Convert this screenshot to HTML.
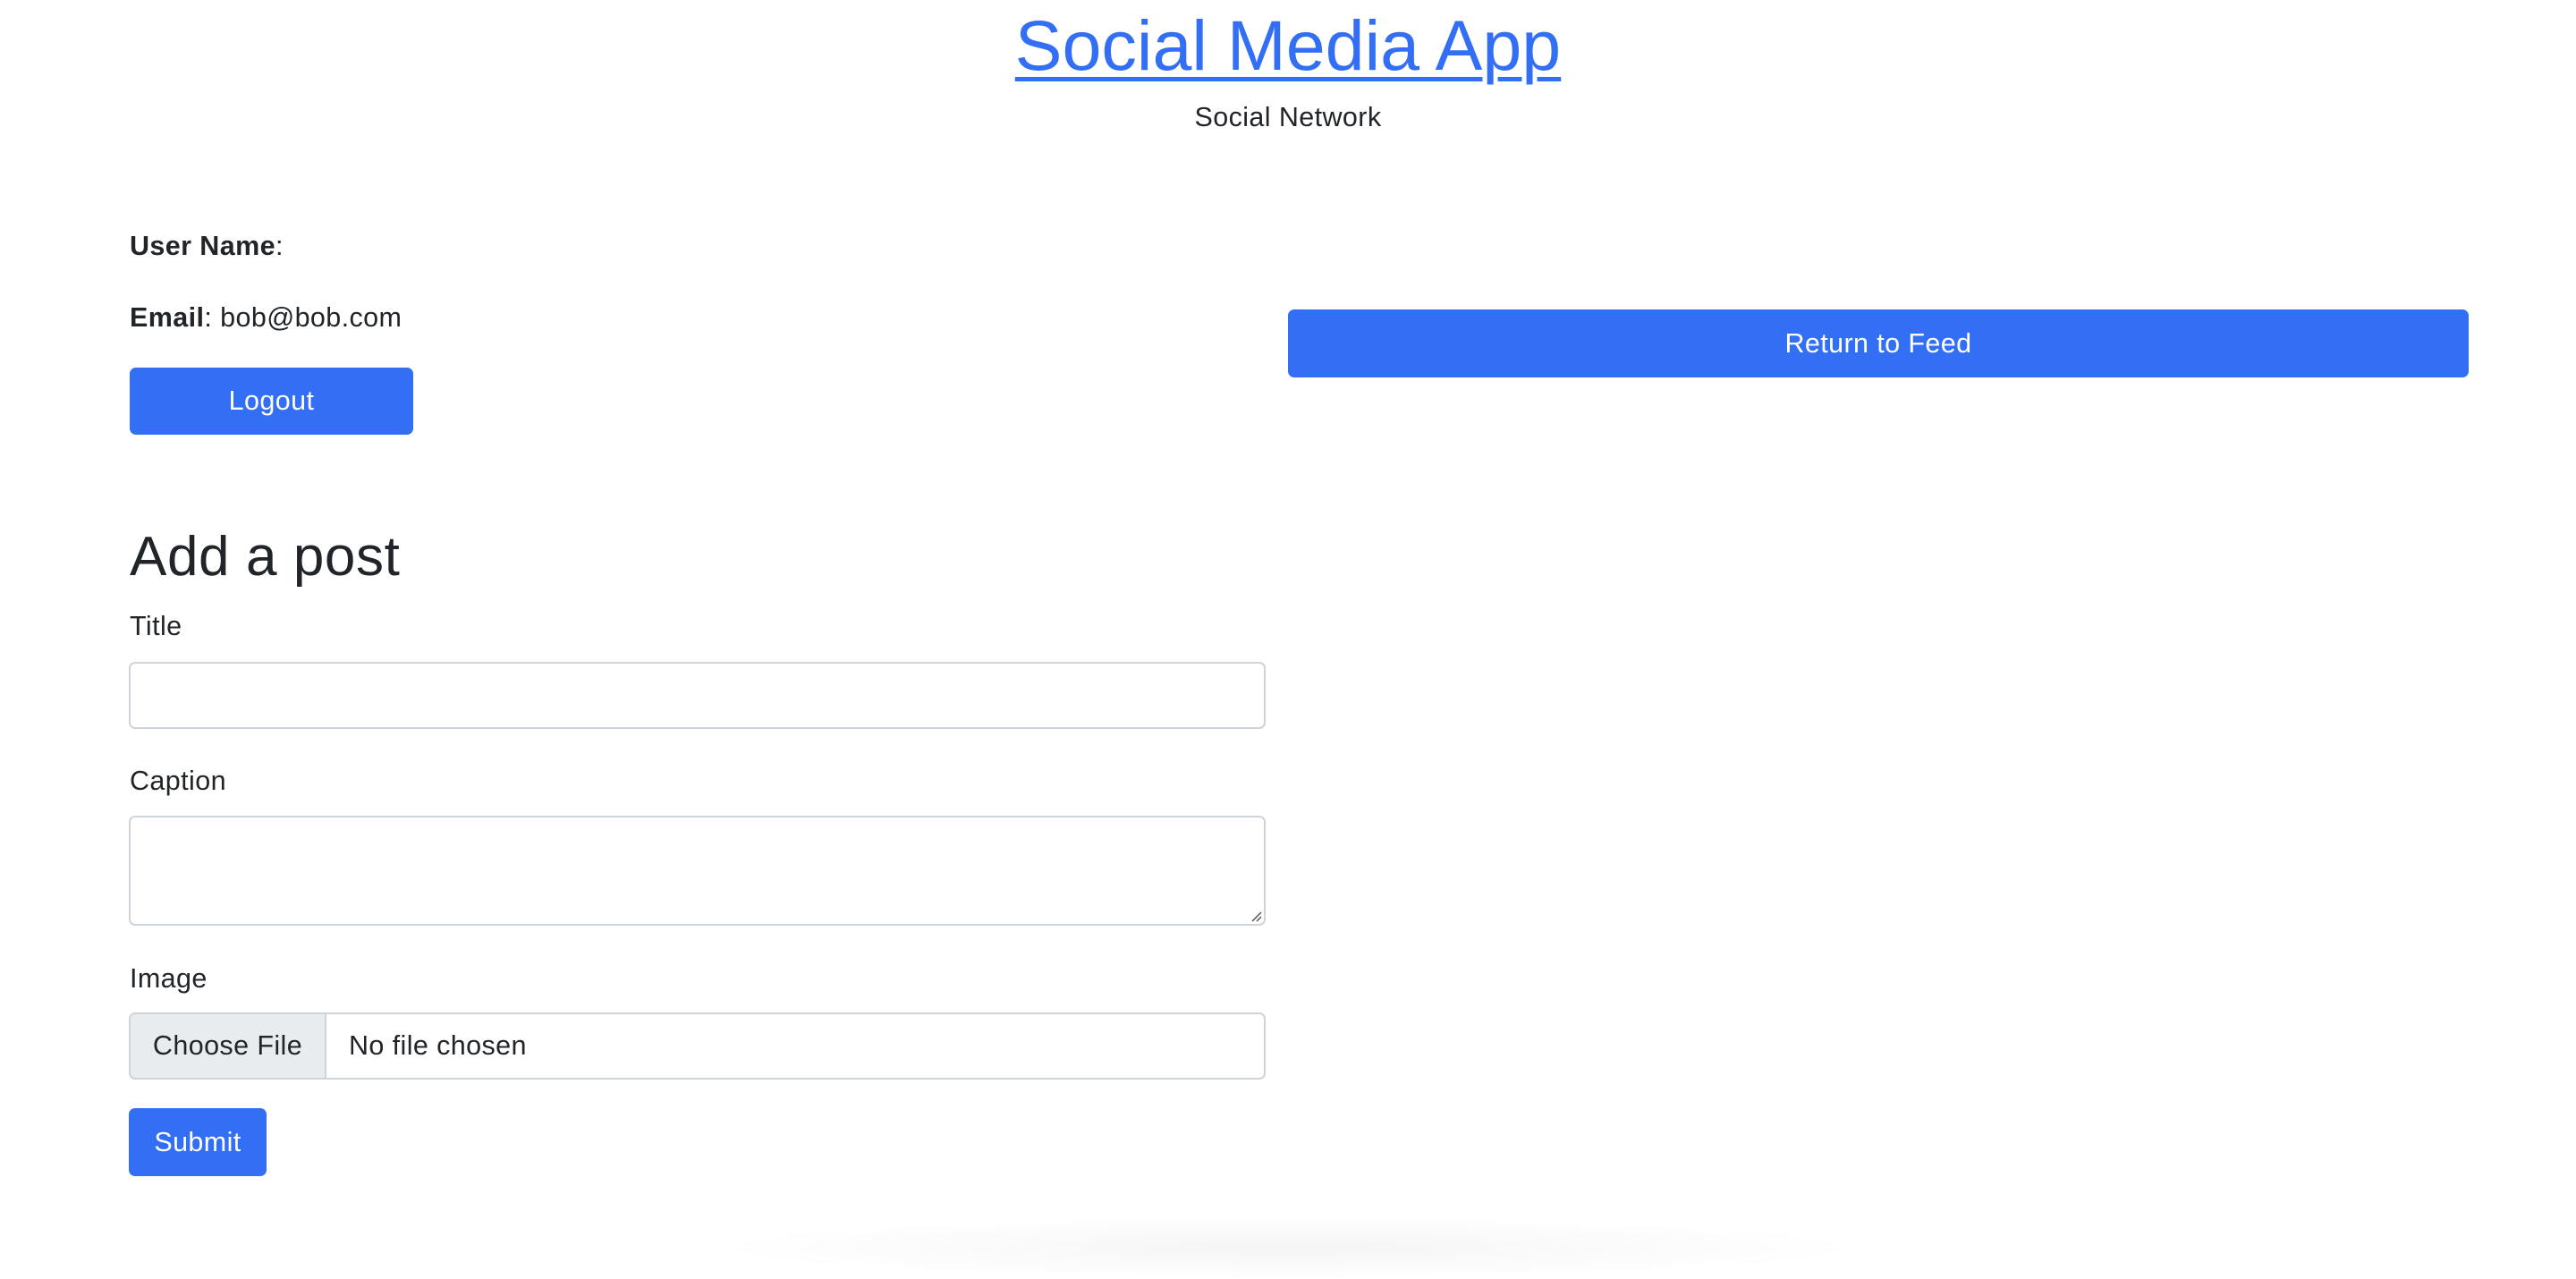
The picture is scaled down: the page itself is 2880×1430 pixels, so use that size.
<!DOCTYPE html>
<html><head><style>
*{box-sizing:border-box;margin:0;padding:0}
body{width:2880px;height:1384px;background:#fff;font-family:"Liberation Sans",sans-serif;color:#212529;position:relative;overflow:hidden;font-size:30.5px;letter-spacing:0.4px}
.a{position:absolute;white-space:nowrap}
.btn{position:absolute;background:#336ff5;color:#fff;border-radius:7px;display:flex;align-items:center;justify-content:center;font-size:30.5px}
.inp{position:absolute;border:2px solid #ced4da;border-radius:7px;background:#fff}
</style></head><body>
<div class="a" style="left:0;width:2880px;text-align:center;top:3px;font-size:79px;line-height:96px;letter-spacing:0"><span style="color:#336ff5;text-decoration:underline;text-decoration-thickness:5px;text-underline-offset:8px">Social Media App</span></div>
<div class="a" style="left:0;width:2880px;text-align:center;top:113px;line-height:36px">Social Network</div>
<div class="a" style="left:145px;top:257px;line-height:36px"><b>User Name</b>:</div>
<div class="a" style="left:145px;top:337px;line-height:36px"><b>Email</b>: bob@bob.com</div>
<div class="btn" style="left:145px;top:411px;width:317px;height:75px">Logout</div>
<div class="btn" style="left:1440px;top:346px;width:1320px;height:76px">Return to Feed</div>
<div class="a" style="left:145px;top:588px;font-size:62px;line-height:70px;letter-spacing:0.6px">Add a post</div>
<div class="a" style="left:145px;top:682px;line-height:36px">Title</div>
<div class="inp" style="left:144px;top:740px;width:1271px;height:75px"></div>
<div class="a" style="left:145px;top:855px;line-height:36px">Caption</div>
<div class="inp" style="left:144px;top:912px;width:1271px;height:123px"><svg style="position:absolute;right:2px;bottom:2px" width="14" height="14"><path d="M13 3L3 13M13 8L8 13" stroke="#555" stroke-width="1.5"/></svg></div>
<div class="a" style="left:145px;top:1076px;line-height:36px">Image</div>
<div class="inp" style="left:144px;top:1132px;width:1271px;height:75px;overflow:hidden">
<div style="position:absolute;left:0;top:0;width:219px;height:100%;background:#e9ecef;border-right:2px solid #ced4da;display:flex;align-items:center;justify-content:center">Choose File</div>
<div class="a" style="left:244px;top:0;line-height:71px">No file chosen</div>
</div>
<div class="btn" style="left:144px;top:1239px;width:154px;height:76px">Submit</div>
<div style="position:absolute;left:780px;width:1320px;top:1360px;height:70px;border-radius:50%;background:radial-gradient(ellipse at center,rgba(0,0,0,0.04),rgba(0,0,0,0) 70%)"></div>
</body></html>
